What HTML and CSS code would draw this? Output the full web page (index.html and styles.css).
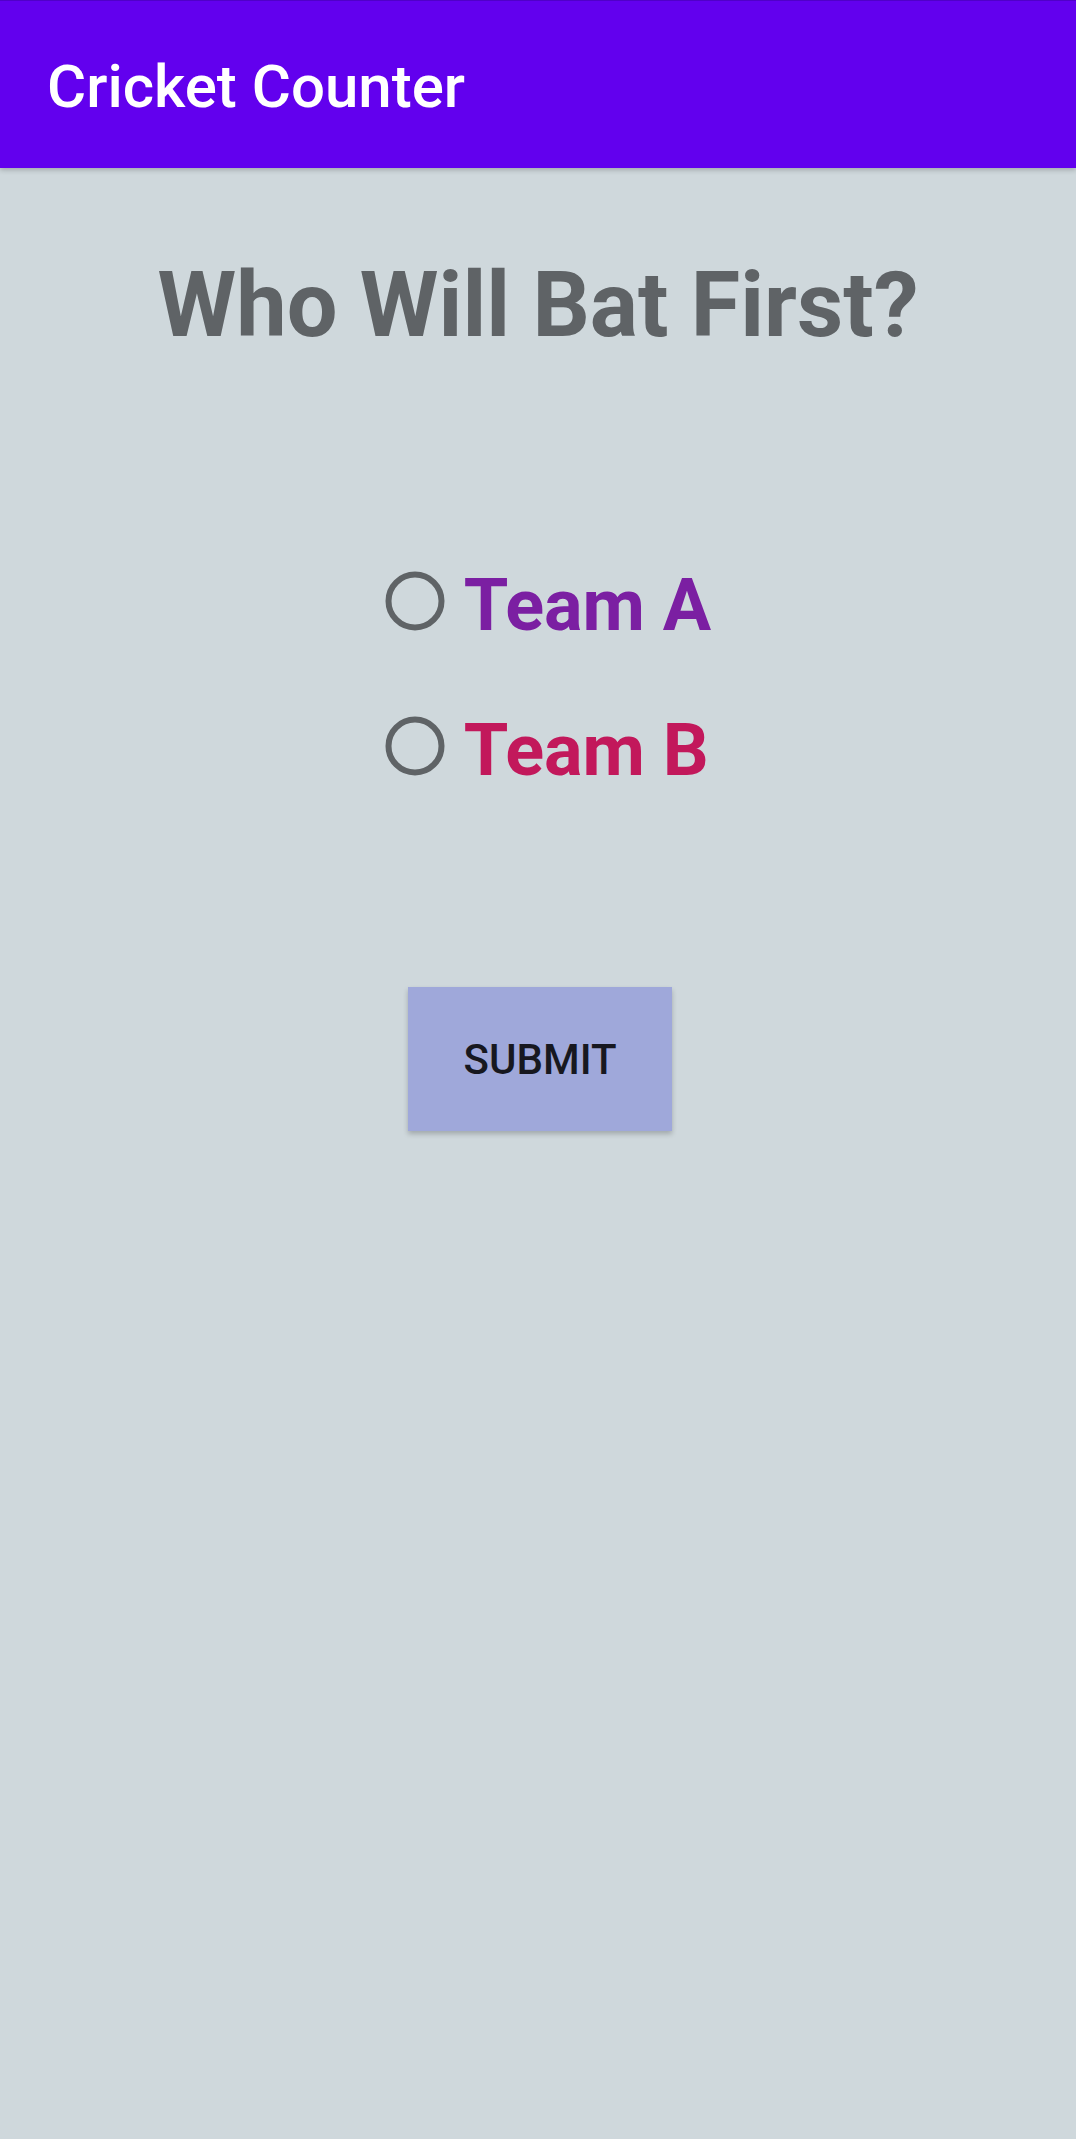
FILE: index.html
```html
<!DOCTYPE html>
<html lang="en">
<head>
<meta charset="utf-8">
<title>Cricket Counter</title>
<link rel="stylesheet" href="styles.css">
</head>
<body>
<div class="app">
  <header class="toolbar">
    <h1 class="toolbar-title">Cricket Counter</h1>
  </header>
  <main class="content">
    <h2 class="question">Who Will Bat First?</h2>
    <div class="radio-group">
      <label class="radio-row">
        <svg class="radio-icon" width="60" height="60" viewBox="0 0 60 60"><circle cx="30" cy="30" r="26.5" fill="none" stroke="#5f6366" stroke-width="6"/></svg>
        <span class="radio-label team-a">Team A</span>
      </label>
      <label class="radio-row">
        <svg class="radio-icon" width="60" height="60" viewBox="0 0 60 60"><circle cx="30" cy="30" r="26.5" fill="none" stroke="#5f6366" stroke-width="6"/></svg>
        <span class="radio-label team-b">Team B</span>
      </label>
    </div>
    <button class="submit-btn" type="button">SUBMIT</button>
  </main>
</div>
</body>
</html>
```

FILE: styles.css
```css
html, body {
  margin: 0;
  padding: 0;
}
body {
  background: #cfd8dc;
  font-family: Roboto, "Noto Sans", "Liberation Sans", sans-serif;
}
.app {
  min-height: 100vh;
  display: flex;
  flex-direction: column;
}
.toolbar {
  height: 168px;
  box-sizing: border-box;
  background: #6200ee;
  border-top: 1px solid #5000c8;
  display: flex;
  align-items: center;
  padding-left: 47px;
  padding-top: 4px;
  box-shadow: 0 2px 5px rgba(0, 0, 0, 0.22);
  position: relative;
  z-index: 1;
}
.toolbar-title {
  margin: 0;
  color: #ffffff;
  font-size: 60px;
  font-weight: 500;
  line-height: 1;
}
.content {
  display: flex;
  flex-direction: column;
  align-items: center;
}
.question {
  margin: 93px 0 0;
  font-size: 90px;
  font-weight: 700;
  line-height: 1;
  color: #5f6366;
  text-align: center;
}
.radio-group {
  margin-top: 219px;
  display: flex;
  flex-direction: column;
  gap: 73px;
  padding-left: 20px;
}
.radio-row {
  display: flex;
  align-items: flex-start;
  gap: 19px;
  height: 72px;
}
.radio-icon {
  display: block;
  margin-top: 1px;
  flex: none;
}
.radio-label {
  font-size: 72px;
  font-weight: 700;
  line-height: 1;
}
.team-a { color: #7b1fa2; }
.team-b { color: #c2185b; }
.submit-btn {
  margin-top: 200px;
  width: 264px;
  height: 144px;
  border: none;
  background: #9fa8da;
  color: #17181f;
  font-family: Roboto, "Noto Sans", sans-serif;
  font-size: 42px;
  font-weight: 500;
  box-shadow: 0 3px 5px rgba(0, 0, 0, 0.22);
  padding: 0;
  margin-left: 4px;
}
```
